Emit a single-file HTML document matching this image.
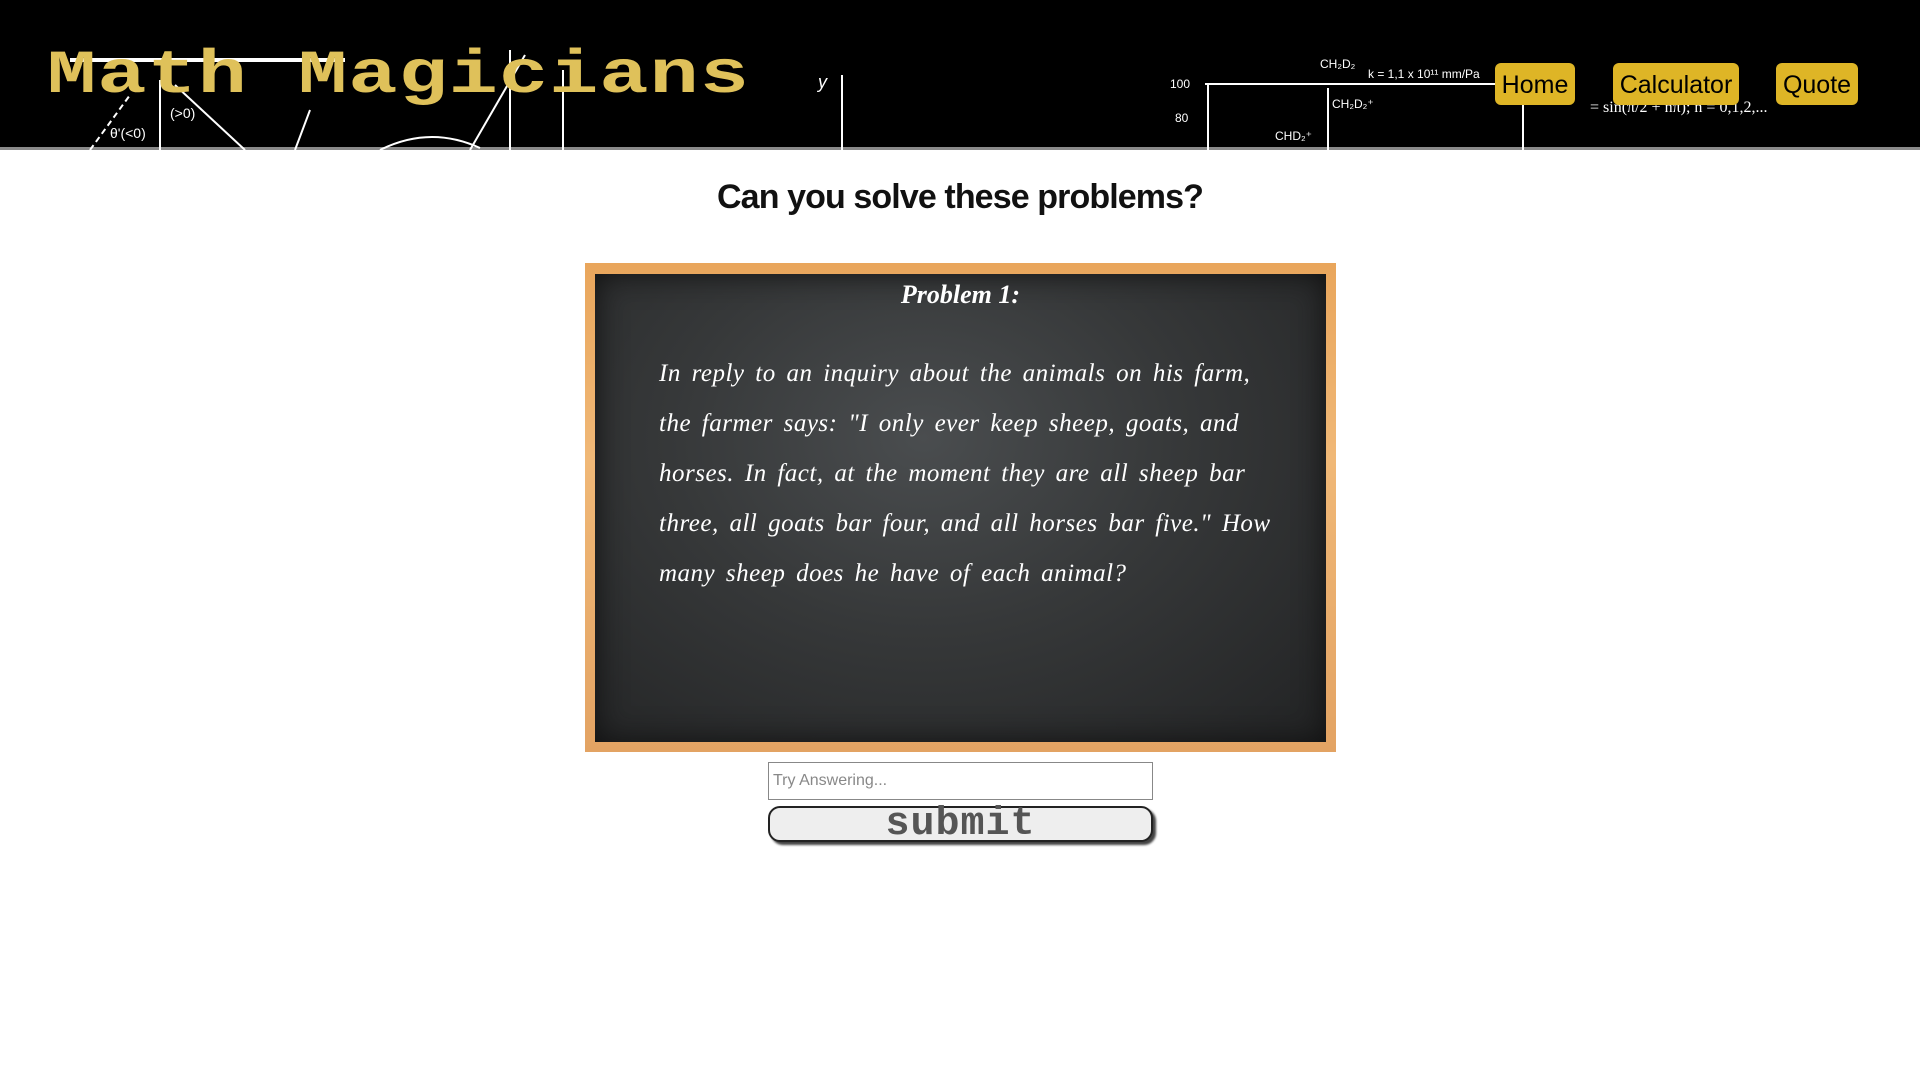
<!DOCTYPE html>
<html><head><meta charset="utf-8">
<style>
*{margin:0;padding:0;box-sizing:border-box}
body{width:1920px;height:1080px;background:#fff;font-family:"Liberation Sans",sans-serif;overflow:hidden;position:relative}
header{position:absolute;left:0;top:0;width:1920px;height:150px;background:#000;border-bottom:3px solid #8a8a8a}
header svg{position:absolute;left:0;top:0}
.title{position:absolute;left:47px;top:50px;font-family:"Liberation Mono",monospace;font-weight:bold;font-size:82px;line-height:70px;color:#dfc15a;letter-spacing:1px;transform:scaleY(0.75);transform-origin:0 0}
.nav{position:absolute;top:63px;height:42px;background:#deb526;border-radius:6px;font-size:25px;line-height:44px;color:#000;padding:0 6px;text-align:center}
h1{position:absolute;top:178px;left:0;width:1920px;text-align:center;font-size:34px;font-weight:bold;color:#111;letter-spacing:-0.9px}
.board{position:absolute;left:585px;top:263px;width:751px;height:489px;background:linear-gradient(180deg,#e9a65c,#f0b877 40%,#e3a363);padding:11px 10px 10px 10px}
.inner{width:100%;height:100%;background:radial-gradient(ellipse at 45% 35%,#4a4d4f 0%,#363839 45%,#222324 100%);position:relative;box-shadow:inset 0 0 30px #111}
.ptitle{position:absolute;top:6px;left:0;width:100%;text-align:center;color:#fff;font-family:"Liberation Serif",serif;font-style:italic;font-weight:bold;font-size:26px}
.ptext{position:absolute;left:64px;top:75px;width:620px;color:#fff;font-family:"Liberation Serif",serif;font-style:italic;font-size:25px;line-height:50px;letter-spacing:0.5px;word-spacing:4px}
input{position:absolute;left:768px;top:762px;width:385px;height:38px;border:1px solid #888;font-size:16px;padding-left:4px;font-family:"Liberation Sans",sans-serif}
input::placeholder{color:#888}
.btn{position:absolute;left:768px;top:806px;width:385px;height:36px;background:#eee;border:2px solid #222;border-radius:12px;box-shadow:3px 3px 2px #444;text-align:center;font-family:"Liberation Mono",monospace;font-weight:bold;font-size:40px;line-height:34px;color:#555;letter-spacing:1px}
</style></head><body>
<header>
<svg width="1920" height="150" stroke="#fff" fill="none" stroke-width="2">
<line x1="70" y1="60" x2="345" y2="60" stroke-width="4"/>
<line x1="160" y1="80" x2="160" y2="150"/>
<line x1="90" y1="150" x2="130" y2="95" stroke-dasharray="6 4"/>
<line x1="175" y1="85" x2="245" y2="150"/>
<line x1="295" y1="150" x2="310" y2="110"/>
<path d="M380 150 Q430 125 480 148"/>
<line x1="470" y1="150" x2="525" y2="55"/>
<line x1="510" y1="50" x2="510" y2="150"/>
<line x1="563" y1="70" x2="563" y2="150"/>
<line x1="842" y1="75" x2="842" y2="150"/>
<line x1="1205" y1="84" x2="1500" y2="84"/>
<line x1="1208" y1="84" x2="1208" y2="150"/>
<line x1="1328" y1="88" x2="1328" y2="150"/>
<line x1="1523" y1="100" x2="1523" y2="150"/>
<g fill="#fff" stroke="none" font-family="Liberation Sans" font-size="12">
<text x="1170" y="88">100</text><text x="1175" y="122">80</text>
<text x="1320" y="68">CH₂D₂</text><text x="1368" y="78">k = 1,1 x 10¹¹ mm/Pa</text>
<text x="1332" y="108">CH₂D₂⁺</text><text x="1275" y="140">CHD₂⁺</text>
<text x="1590" y="112" font-family="Liberation Serif" font-size="16">= sin(π/2 + nπ); n = 0,1,2,...</text>
<text x="110" y="138" font-size="14">θ'(&lt;0)</text><text x="170" y="118" font-size="14">(&gt;0)</text>
<text x="818" y="88" font-size="18" font-style="italic">y</text>
</g>
</svg>
<div class="title">Math Magicians</div>
<div class="nav" style="left:1495px;width:80px">Home</div>
<div class="nav" style="left:1613px;width:126px">Calculator</div>
<div class="nav" style="left:1776px;width:82px">Quote</div>
</header>
<h1>Can you solve these problems?</h1>
<div class="board"><div class="inner">
<div class="ptitle">Problem 1:</div>
<div class="ptext">In reply to an inquiry about the animals on his farm, the farmer says: "I only ever keep sheep, goats, and horses. In fact, at the moment they are all sheep bar three, all goats bar four, and all horses bar five." How many sheep does he have of each animal?</div>
</div></div>
<input placeholder="Try Answering...">
<div class="btn">submit</div>
</body></html>
